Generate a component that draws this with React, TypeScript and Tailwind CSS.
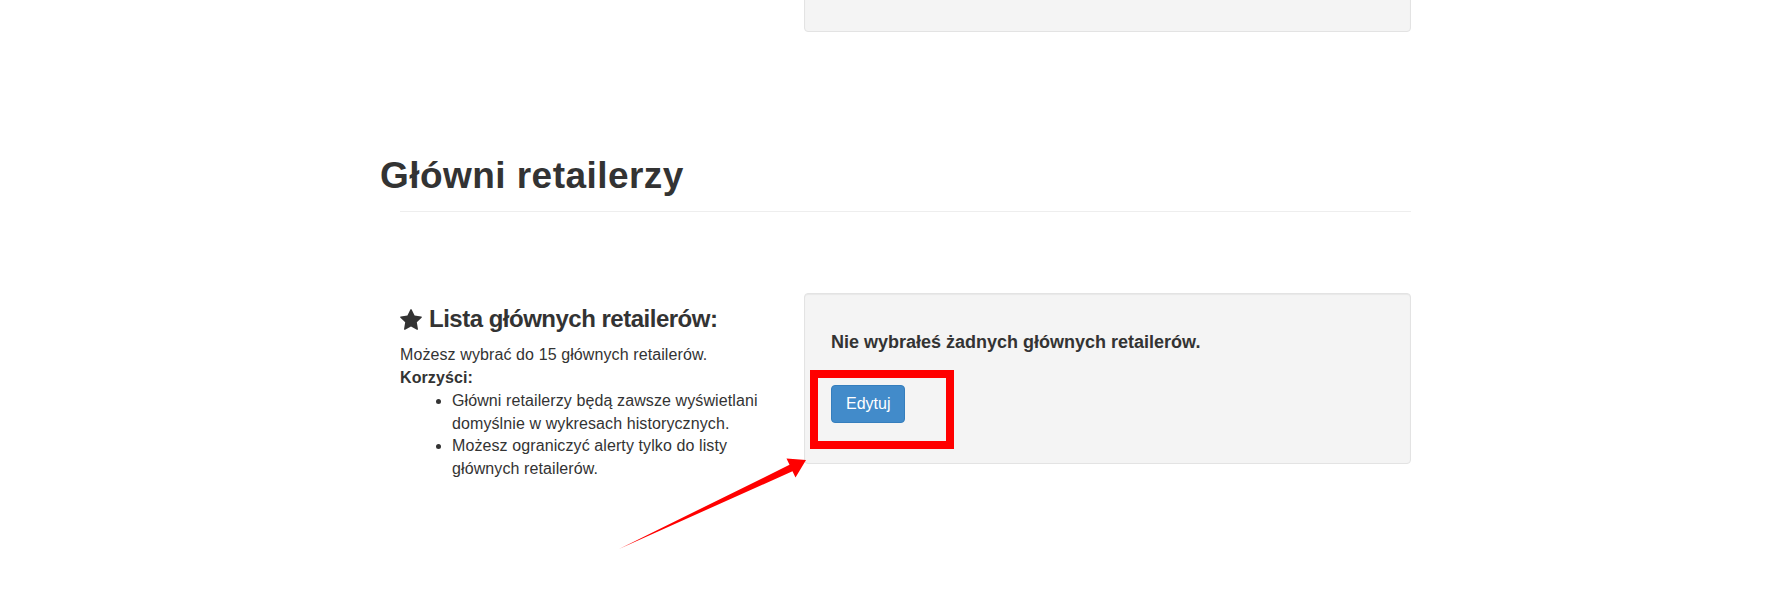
import React from "react";

function StarIcon() {
  return (
    <svg width="22" height="21" viewBox="0 0 1664 1600" className="shrink-0" aria-hidden="true">
      <path
        fill="#333333"
        d="M1664 615q0 22-26 48l-363 354 86 500q1 7 1 20 0 21-10.5 35.5T1321 1587q-19 0-40-12l-449-236-449 236q-22 12-40 12-21 0-31.5-14.5T301 1537q0-6 2-20l86-500L25 663Q0 636 0 615q0-37 56-46l502-73L783 41q19-41 49-41t49 41l225 455 502 73q56 9 56 46z"
      />
    </svg>
  );
}

export default function App() {
  return (
    <div className="relative h-[592px] w-full overflow-hidden bg-white font-['Liberation_Sans',Arial,sans-serif] text-[#333333]">
      <div className="ml-[400px] w-[1011px]">
        {/* previous section panel (cut off at top) */}
        <div className="-mt-[68px] ml-[404px] h-[100px] w-[607px] rounded-[4px] border border-[#e3e3e3] bg-[#f4f4f4] shadow-[inset_0_1px_1px_rgba(0,0,0,0.05)]" />

        <h1 className="-ml-[20px] mt-[124px] text-[37px] font-bold leading-[40px] tracking-[0.45px] text-[#333333]">
          Główni retailerzy
        </h1>
        <div className="mt-[15px] border-t border-[#eeeeee]" />

        <div className="mt-[81px] flex">
          <div className="w-[380px] pt-[13px]">
            <div className="flex items-center gap-[7px]">
              <StarIcon />
              <h3 className="text-[24px] font-bold leading-[26px] tracking-[-0.5px]">
                Lista głównych retailerów:
              </h3>
            </div>
            <div className="mt-[12px] text-[16px] leading-[1.42857] tracking-[0.1px]">
              <p>Możesz wybrać do 15 głównych retailerów.</p>
              <p className="font-bold">Korzyści:</p>
              <ul className="list-disc pl-[52px]">
                <li>Główni retailerzy będą zawsze wyświetlani domyślnie w wykresach historycznych.</li>
                <li>Możesz ograniczyć alerty tylko do listy głównych retailerów.</li>
              </ul>
            </div>
          </div>

          <div className="relative ml-[24px] h-[171px] w-[607px] rounded-[4px] border border-[#e3e3e3] bg-[#f4f4f4] px-[26px] pt-[38px] shadow-[inset_0_1px_1px_rgba(0,0,0,0.05)]">
            <h4 className="text-[18px] font-bold leading-[20px]">
              Nie wybrałeś żadnych głównych retailerów.
            </h4>
            <div className="mt-[33px] flex">
              <button className="h-[38px] rounded-[4px] border border-[#357ebd] bg-[#428bca] px-[14px] text-[16px] leading-[36px] text-white">
                Edytuj
              </button>
            </div>
            <div className="pointer-events-none absolute left-[5px] top-[76px] h-[79px] w-[144px] border-[8px] border-[#ff0000]" />
          </div>
        </div>
      </div>

      <svg
        className="pointer-events-none absolute left-0 top-0"
        width="1780"
        height="592"
        viewBox="0 0 1780 592"
        aria-hidden="true"
      >
        <polygon
          fill="#ff0000"
          points="619,549 789.5,464.8 786.5,458.5 806,460 795.5,477.5 792.5,471.2"
        />
      </svg>
    </div>
  );
}
